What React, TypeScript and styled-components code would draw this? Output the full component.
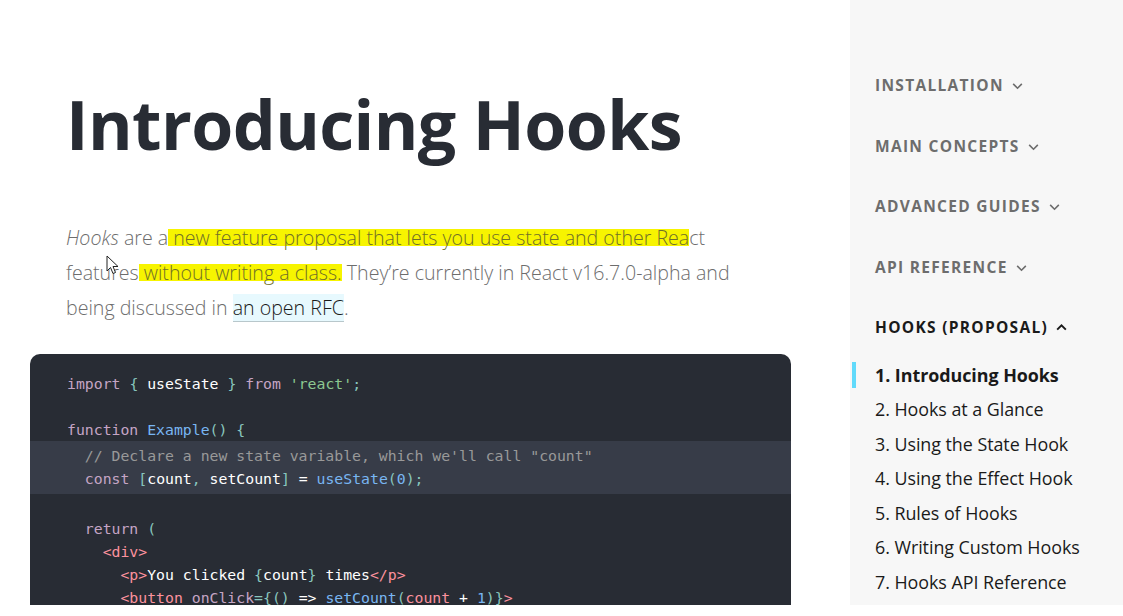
import React from "react";
import styled, { createGlobalStyle } from "styled-components";

const Global = createGlobalStyle`
  html, body { margin: 0; padding: 0; background: #ffffff; }
  body { font-family: "Open Sans", "Noto Sans", sans-serif; overflow: hidden; }
`;

const Page = styled.div`
  display: grid;
  grid-template-columns: 850px 273px;
  width: 1123px;
  height: 605px;
  overflow: hidden;
`;

const Main = styled.main`
  position: relative;
  padding: 74px 0 0 66px;
  background: #ffffff;
  overflow: hidden;
`;

const Title = styled.h1`
  margin: 0;
  font-family: "Open Sans", sans-serif;
  font-weight: 700;
  font-size: 68px;
  line-height: 100px;
  letter-spacing: -0.6px;
  color: #282c34;
`;

const Lead = styled.p`
  margin: 46px 0 0;
  width: 680px;
  font-family: "Open Sans", sans-serif;
  font-weight: 300;
  font-size: 19.6px;
  line-height: 35px;
  color: #6d6d6d;
`;

const Mark = styled.mark`
  background: linear-gradient(to bottom, transparent 20%, #f7f400 20%, #f7f400 82%, transparent 82%);
  color: #707028;
`;

const Link = styled.a`
  color: #1a1a1a;
  background: rgba(187, 239, 253, 0.35);
  border-bottom: 1px solid rgba(0, 0, 0, 0.2);
  text-decoration: none;
`;

const CodeBlock = styled.pre`
  margin: 29px 0 0 -36px;
  width: 761px;
  padding: 17.5px 0 20px;
  background: #282c34;
  border-radius: 10px;
  font-family: "DejaVu Sans Mono", "Liberation Mono", monospace;
  font-size: 14.8px;
  line-height: 23.2px;
  color: #ffffff;
  overflow: hidden;
`;

const Highlight = styled.div`
  background: #373c48;
  padding: 3px 0;
`;

const Line = styled.div`
  padding-left: 37px;
  white-space: pre;
  min-height: 23.2px;
`;

const tokenColors: Record<string, string> = {
  k: "#c5a5c5",
  p: "#88c6be",
  s: "#8dc891",
  f: "#79b6f2",
  c: "#999999",
  t: "#fc929e",
  n: "#79b6f2",
  w: "#ffffff",
};

const Tok = styled.span<{ $k: string }>`
  color: ${(p) => tokenColors[p.$k]};
`;

type Tk = [string, string];

const codeTop: Tk[][] = [
  [["import", "k"], [" ", "w"], ["{", "p"], [" useState ", "w"], ["}", "p"], [" ", "w"], ["from", "k"], [" ", "w"], ["'react'", "s"], [";", "p"]],
  [],
  [["function", "k"], [" ", "w"], ["Example", "f"], ["()", "p"], [" ", "w"], ["{", "p"]],
];
const codeHi: Tk[][] = [
  [["  // Declare a new state variable, which we'll call \"count\"", "c"]],
  [["  ", "w"], ["const", "k"], [" ", "w"], ["[", "p"], ["count", "w"], [",", "p"], [" setCount", "w"], ["]", "p"], [" = ", "w"], ["useState", "f"], ["(", "p"], ["0", "n"], [");", "p"]],
];
const codeBottom: Tk[][] = [
  [],
  [["  ", "w"], ["return", "k"], [" ", "w"], ["(", "p"]],
  [["    ", "w"], ["<div>", "t"]],
  [["      ", "w"], ["<p>", "t"], ["You clicked ", "w"], ["{", "p"], ["count", "w"], ["}", "p"], [" times", "w"], ["</p>", "t"]],
  [["      ", "w"], ["<button", "t"], [" ", "w"], ["onClick", "k"], ["={", "p"], ["()", "p"], [" => ", "w"], ["setCount", "f"], ["(", "p"], ["count", "t"], [" + ", "w"], ["1", "n"], [")}", "p"], [">", "t"]],
];

const renderLines = (lines: Tk[][], key: string) =>
  lines.map((l, i) => (
    <Line key={key + i}>
      {l.map(([t, k], j) => (
        <Tok key={j} $k={k}>
          {t}
        </Tok>
      ))}
    </Line>
  ));

const Cursor = styled.svg`
  position: absolute;
  left: 106px;
  top: 255px;
  width: 13px;
  height: 20px;
`;

const Sidebar = styled.nav`
  background: #f7f7f7;
  padding: 72px 0 0 25px;
  display: flex;
  flex-direction: column;
`;

const Section = styled.div<{ $active?: boolean }>`
  display: flex;
  align-items: center;
  gap: 7px;
  height: 26px;
  margin-bottom: 34.5px;
  font-family: "Open Sans", sans-serif;
  font-weight: 700;
  font-size: 15.5px;
  letter-spacing: 1.3px;
  text-transform: uppercase;
  color: ${(p) => (p.$active ? "#1a1a1a" : "#6d6d6d")};
`;

const Chevron = styled.svg`
  width: 13px;
  height: 13px;
  margin-top: 1px;
`;

const Items = styled.ul`
  list-style: none;
  margin: -17px 0 0;
  padding: 0;
`;

const Item = styled.li<{ $active?: boolean }>`
  position: relative;
  height: 34.5px;
  line-height: 34.5px;
  font-family: "Open Sans", sans-serif;
  font-size: 17.9px;
  letter-spacing: -0.05px;
  font-weight: ${(p) => (p.$active ? 700 : 400)};
  color: #1a1a1a;
  &::before {
    content: "";
    display: ${(p) => (p.$active ? "block" : "none")};
    position: absolute;
    left: -23px;
    top: 4px;
    width: 4px;
    height: 26px;
    background: #61dafb;
  }
`;

const Down = () => (
  <Chevron viewBox="0 0 12 12" fill="none" stroke="currentColor" strokeWidth="1.5">
    <path d="M2 4.5l4 4 4-4" />
  </Chevron>
);
const Up = () => (
  <Chevron viewBox="0 0 12 12" fill="none" stroke="currentColor" strokeWidth="1.8">
    <path d="M2 8l4-4 4 4" />
  </Chevron>
);

export default function App() {
  return (
    <>
      <Global />
      <Page>
        <Main>
          <Title>Introducing Hooks</Title>
          <Lead>
            <em>Hooks</em> are a<Mark> new feature proposal that lets you use state and other Rea</Mark>ct
            features<Mark> without writing a class.</Mark> They’re currently in React v16.7.0-alpha and
            being discussed in <Link href="#">an open RFC</Link>.
          </Lead>
          <CodeBlock>
            {renderLines(codeTop, "a")}
            <Highlight>{renderLines(codeHi, "b")}</Highlight>
            {renderLines(codeBottom, "c")}
          </CodeBlock>
          <Cursor viewBox="0 0 13 20">
            <path d="M1 1 L1 16 L4.5 12.5 L7 18.5 L9.5 17.5 L7 11.5 L12 11.5 Z" fill="#fff" stroke="#222" strokeWidth="1" strokeLinejoin="round" />
          </Cursor>
        </Main>
        <Sidebar>
          <Section>Installation<Down /></Section>
          <Section>Main Concepts<Down /></Section>
          <Section>Advanced Guides<Down /></Section>
          <Section>API Reference<Down /></Section>
          <Section $active>Hooks (Proposal)<Up /></Section>
          <Items>
            <Item $active>1. Introducing Hooks</Item>
            <Item>2. Hooks at a Glance</Item>
            <Item>3. Using the State Hook</Item>
            <Item>4. Using the Effect Hook</Item>
            <Item>5. Rules of Hooks</Item>
            <Item>6. Writing Custom Hooks</Item>
            <Item>7. Hooks API Reference</Item>
          </Items>
        </Sidebar>
      </Page>
    </>
  );
}
